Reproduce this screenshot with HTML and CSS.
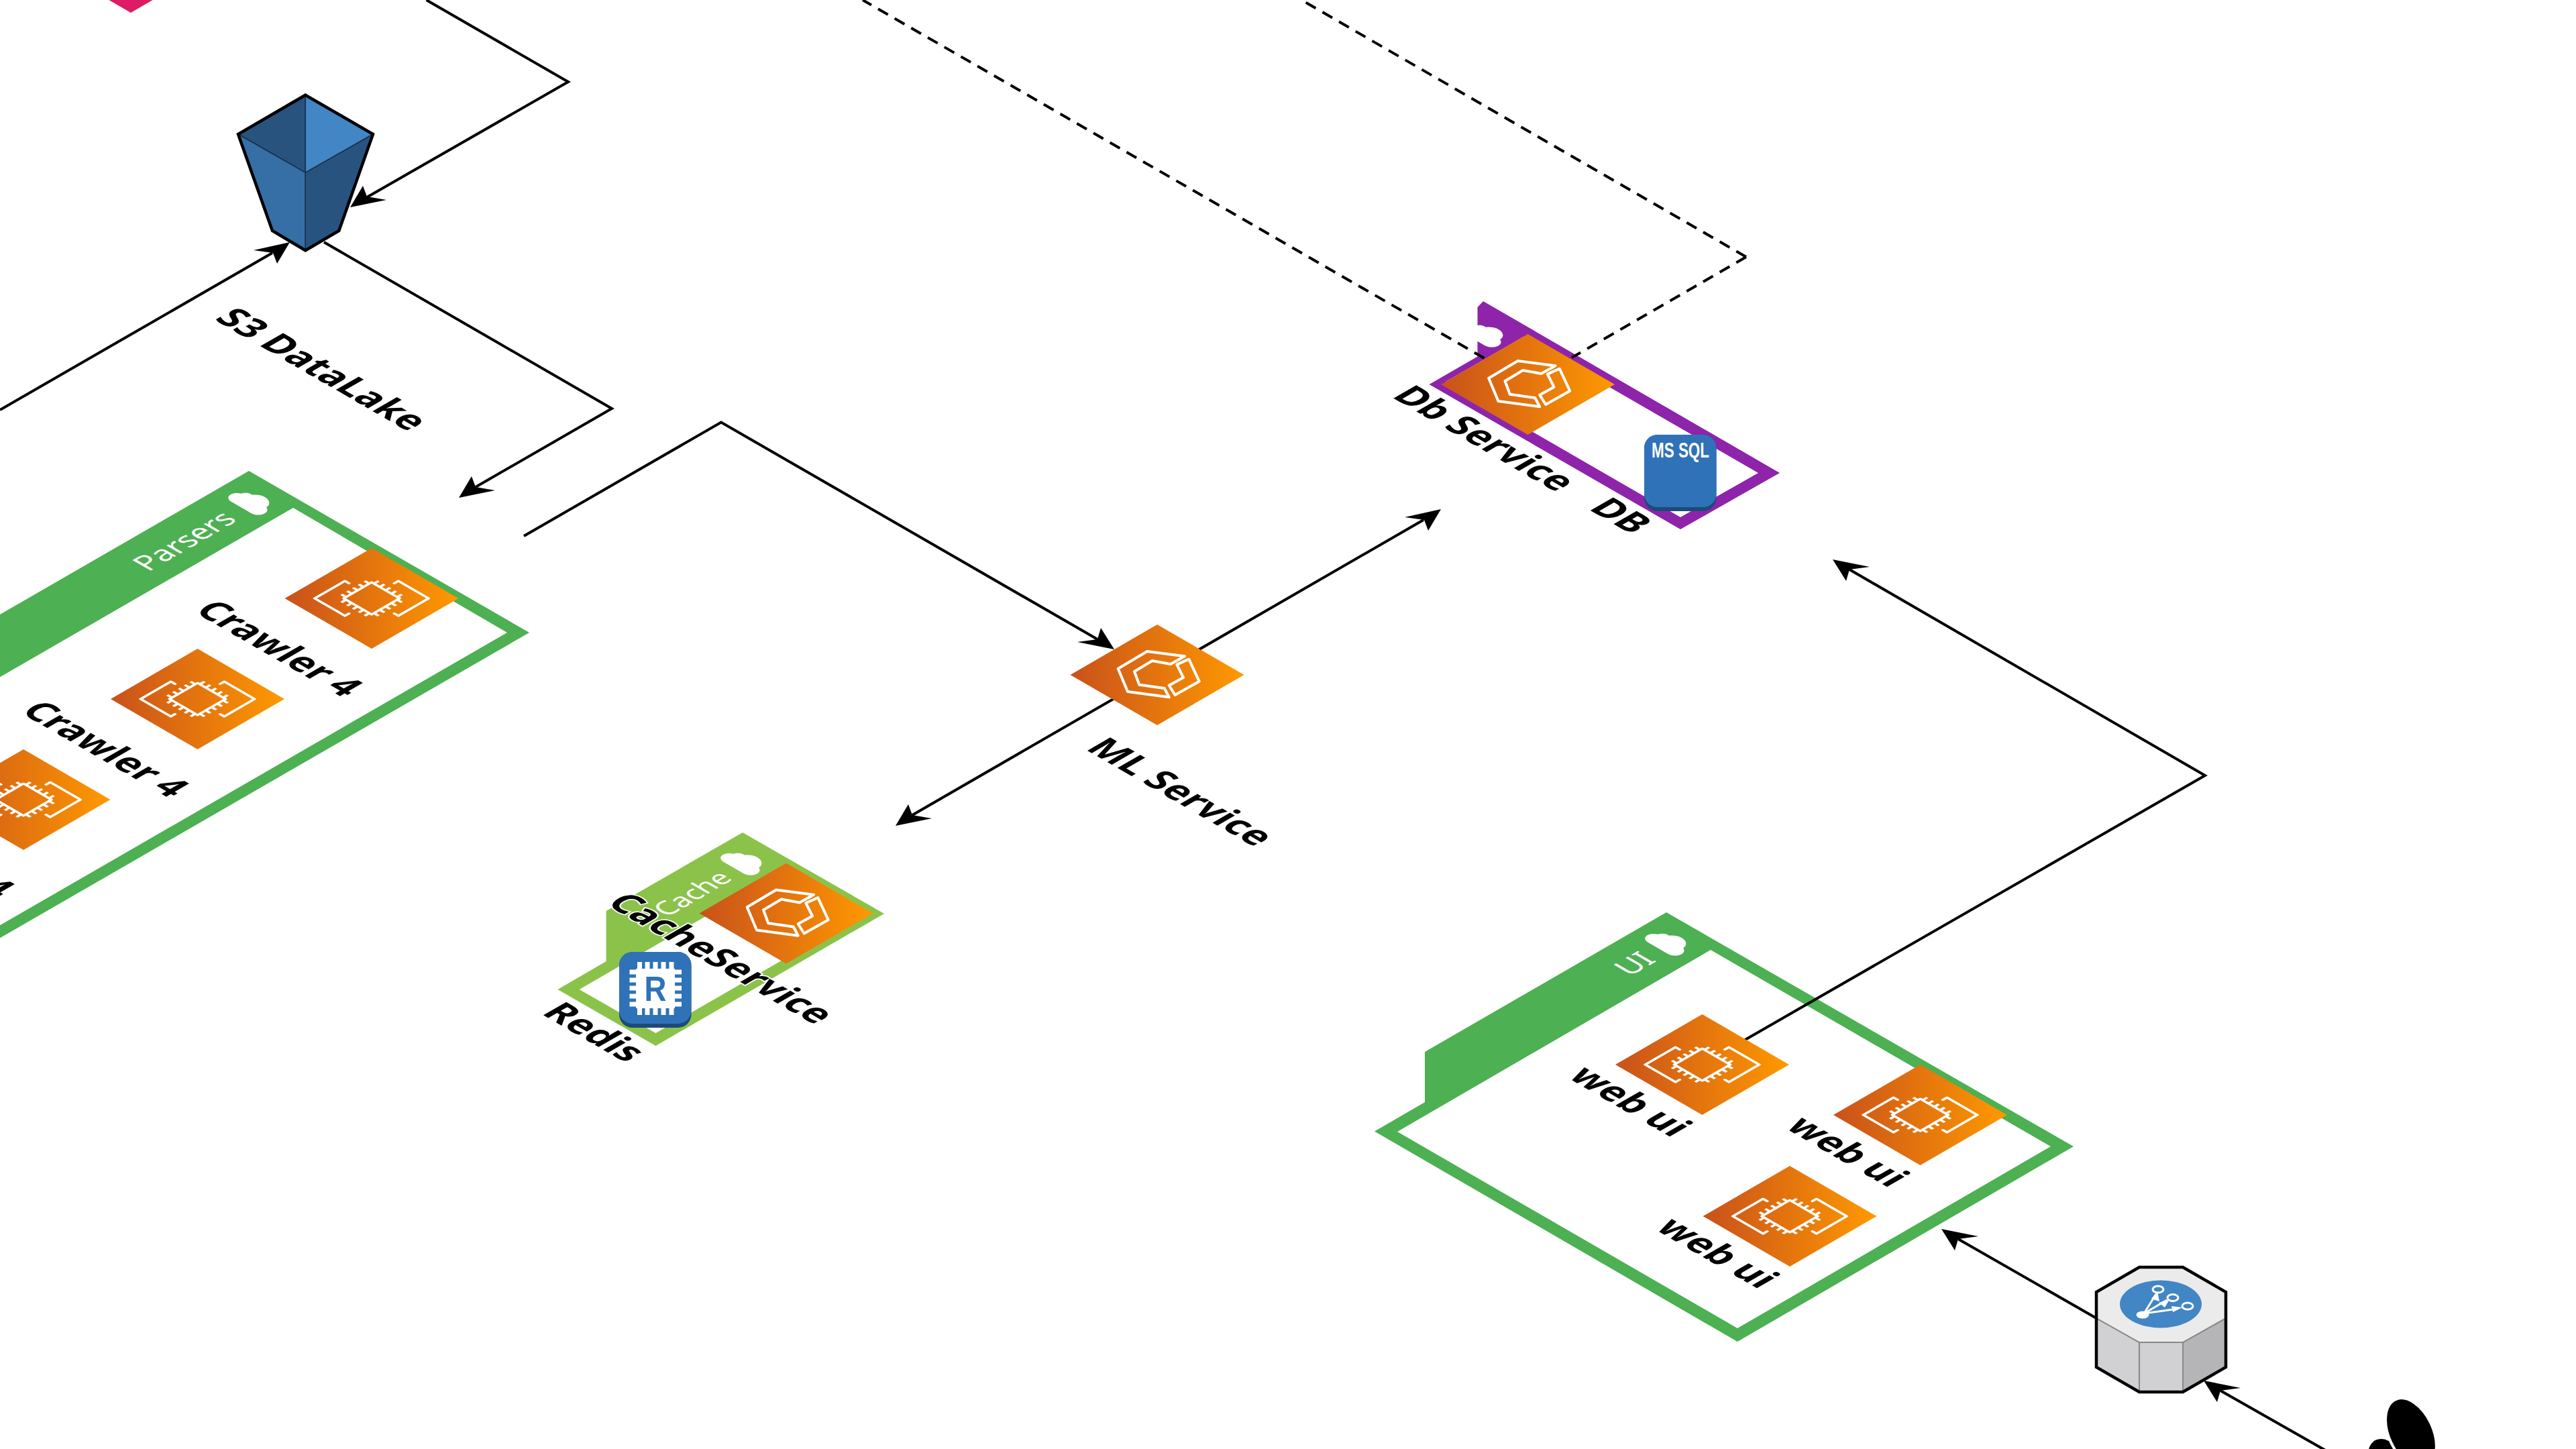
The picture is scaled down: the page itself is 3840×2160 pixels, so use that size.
FILE: index.html
```html
<!DOCTYPE html>
<html lang="en">
<head>
<meta charset="utf-8">
<title>Isometric architecture diagram</title>
<link rel="stylesheet" href="styles.css">
</head>
<body>
<svg class="canvas" xmlns="http://www.w3.org/2000/svg" width="3840" height="2160" viewBox="0 0 3840 2160">
  <defs>
    <linearGradient id="orange" x1="0" y1="0" x2="1" y2="0">
      <stop offset="0" stop-color="#C8511B"/>
      <stop offset="1" stop-color="#FF9900"/>
    </linearGradient>
    <path id="arrow-dl" d="M0 0L19 -32L25 -16L54 -11Z"/>
    <path id="arrow-ur" d="M0 0L-54 12L-25 16L-19 32Z"/>
    <path id="arrow-dr" d="M0 0L-55 -11L-25 -15L-20 -32Z"/>
    <path id="arrow-ul" d="M0 0L55 11L25 15L20 32Z"/>
    <path id="cloud" class="cloud" transform="matrix(1.108 .64 -1.108 .64 0 0)" d="M-14 14H12C18 14 22 10 22 5C22 1 19 -2 16 -3C16 -9 10 -14 3 -14C-2 -14 -6 -11 -8 -8C-11 -9 -16 -7 -17 -2C-20 -1 -23 2 -23 6C-23 11 -19 14 -14 14Z"/>
    <g id="ec2">
      <polygon class="tile" points="-129.5,0 0,-75 129.5,0 0,75"/>
      <g class="glyph" transform="matrix(.866 .5 -.866 .5 0 0)">
        <rect x="-24" y="-24" width="48" height="48"/>
        <path d="M-42 -3H-49V49H3V42M-3 -42V-49H49V3H42"/>
        <path class="pins" d="M-20 -24V-32M-10 -24V-32M0 -24V-32M10 -24V-32M20 -24V-32M-20 24V32M-10 24V32M0 24V32M10 24V32M20 24V32M-24 -20H-32M-24 -10H-32M-24 0H-32M-24 10H-32M-24 20H-32M24 -20H32M24 -10H32M24 0H32M24 10H32M24 20H32"/>
      </g>
    </g>
    <g id="hexbox">
      <polygon class="tile" points="-129.5,0 0,-75 129.5,0 0,75"/>
      <g class="glyph">
        <polygon points="41,-27.7 -15,-35 -58.3,-9.3 -44,25 17.7,33.3 10.7,20 -26.7,14.7 -34,-5 -7.3,-21 20,-16"/>
        <polygon points="47.3,-23.3 62.7,9.7 26.7,30 17.7,15.7 39,4 29.3,-15.3"/>
      </g>
    </g>
  </defs>

  <polygon class="pink" points="195,19 128,-20 195,-60 262,-20"/>

  <!-- groups -->
  <path class="group group-green" fill-rule="evenodd" d="M371 702L789 943L-100 1456L-100 916L0 916ZM437 757L756 943L-100 1437L-100 1067Z"/>
  <path class="group group-lime" fill-rule="evenodd" d="M1107 1241L1318 1362L977.5 1559L831.4 1475L903.6 1433V1358ZM1176 1294L1290 1360L977.5 1540L863.6 1475Z"/>
  <path class="group group-purple" fill-rule="evenodd" d="M2211 449L2653 705L2505 789L2130.5 573L2202.5 531.5V458ZM2270 502.6L2621 705L2505 771L2155 569Z"/>
  <path class="group group-green" fill-rule="evenodd" d="M2484 1360L3091 1709L2590 2000L2049 1686.5L2124 1643V1568ZM2550 1416L3057 1709L2590 1980L2083 1687Z"/>

  <use href="#cloud" x="376" y="748"/>
  <use href="#cloud" x="1110" y="1285"/>
  <use href="#cloud" x="2215" y="498"/>
  <use href="#cloud" x="2488" y="1405"/>

  <!-- connectors -->
  <polyline class="wire" points="635.6,0 847,122 547,294"/>
  <polyline class="wire" points="0,611 406,377"/>
  <polyline class="wire" points="483,361 912,609 709,726"/>
  <polyline class="wire" points="781,799 1075,629.5 1636,953"/>
  <polyline class="wire" points="1360,1215 2122,775"/>
  <polyline class="wire" points="2537,1587 3287,1156 2757,849"/>
  <polyline class="wire" points="3125,1965 2919,1847"/>
  <polyline class="wire" points="3500,2181 3310,2073"/>
  <line class="wire dash" x1="2212.6" y1="534" x2="1286" y2="0"/>
  <line class="wire dash" x1="2603" y1="383" x2="1940" y2="0"/>
  <line class="wire dash" x1="2603" y1="383" x2="2343" y2="533"/>

  <use class="head" href="#arrow-dl" x="522" y="309"/>
  <use class="head" href="#arrow-ur" x="432" y="361"/>
  <use class="head" href="#arrow-dl" x="684" y="742"/>
  <use class="head" href="#arrow-dr" x="1661" y="968"/>
  <use class="head" href="#arrow-ur" x="2148" y="759"/>
  <use class="head" href="#arrow-dl" x="1335" y="1231"/>
  <use class="head" href="#arrow-ul" x="2732" y="834"/>
  <use class="head" href="#arrow-ul" x="2894" y="1832"/>
  <use class="head" href="#arrow-ul" x="3285" y="2058"/>

  <!-- S3 bucket -->
  <g class="bucket">
    <polygon class="b-back-l" points="455.3,141.7 355,200 455.3,257.3"/>
    <polygon class="b-back-r" points="455.3,141.7 556,200 455.3,257.3"/>
    <polygon class="b-front-l" points="355,200 455.3,257.3 455.3,373.3 406,344"/>
    <polygon class="b-front-r" points="556,200 455.3,257.3 455.3,373.3 505.3,344"/>
    <polygon class="b-outline" points="455.3,141.7 556,200 505.3,344 455.3,373.3 406,344 355,200"/>
  </g>

  <!-- compute tiles -->
  <use href="#ec2" x="554" y="892"/>
  <use href="#ec2" x="294.5" y="1042"/>
  <use href="#ec2" x="35" y="1192"/>
  <use href="#ec2" x="2537.5" y="1587"/>
  <use href="#ec2" x="2862.5" y="1662"/>
  <use href="#ec2" x="2668" y="1813"/>
  <use href="#hexbox" x="1725" y="1006"/>
  <use href="#hexbox" x="2277.5" y="573"/>
  <use href="#hexbox" x="1172" y="1361.5"/>

  <!-- MS SQL tile -->
  <rect class="tile-shadow" x="2451" y="648" width="107.5" height="114" rx="20"/>
  <rect class="tile-face" x="2451" y="648" width="107.5" height="108" rx="20"/>
  <text class="icon-text" x="2505" y="682" text-anchor="middle" textLength="86" lengthAdjust="spacingAndGlyphs">MS SQL</text>

  <!-- Redis tile -->
  <rect class="tile-shadow" x="923" y="1419" width="107.5" height="113" rx="20"/>
  <rect class="tile-face" x="923" y="1419" width="107.5" height="107" rx="20"/>
  <rect class="chip" x="948" y="1444" width="58" height="59"/>
  <path class="chip-pins" d="M953.5 1434V1445M965 1434V1445M977 1434V1445M989 1434V1445M1001 1434V1445M953.5 1502V1513M965 1502V1513M977 1502V1513M989 1502V1513M1001 1502V1513M938.5 1449H949M938.5 1461H949M938.5 1473H949M938.5 1485H949M938.5 1497H949M1005 1449H1016M1005 1461H1016M1005 1473H1016M1005 1485H1016M1005 1497H1016"/>
  <text class="chip-r" x="977" y="1492" text-anchor="middle" textLength="33" lengthAdjust="spacingAndGlyphs">R</text>

  <!-- load balancer -->
  <polygon class="hex-left" points="3125,1965 3189,2001 3189,2075 3125,2038"/>
  <polygon class="hex-left" points="3189,2001 3254,2001 3254,2075 3189,2075"/>
  <polygon class="hex-right" points="3254,2001 3318,1965 3318,2038 3254,2075"/>
  <polygon class="hex-top" points="3189,1889 3254,1889 3318,1926 3318,1965 3254,2001 3189,2001 3125,1965 3125,1926"/>
  <polygon class="hex-outline" points="3189,1889 3254,1889 3318,1926 3318,2038 3254,2075 3189,2075 3125,2038 3125,1926"/>
  <ellipse class="lb-disc" cx="3221" cy="1944" rx="61" ry="35.5"/>
  <ellipse class="lb-dot" cx="3194" cy="1960" rx="9.5" ry="5.5"/>
  <ellipse class="lb-ring" cx="3217" cy="1922" rx="8" ry="5"/>
  <ellipse class="lb-ring" cx="3239" cy="1934.5" rx="8" ry="5"/>
  <ellipse class="lb-ring" cx="3261" cy="1947" rx="8" ry="5"/>
  <path class="lb-ray" d="M3196 1958L3214 1929M3196 1958L3230 1938M3196 1958L3246 1951"/>
  <path class="lb-tip" d="M3216 1925L3219 1940L3207 1936ZM3234 1937L3227 1949L3218 1942ZM3253 1949L3239 1956L3237 1947Z"/>

  <!-- client -->
  <ellipse class="client" cx="3562" cy="2190" rx="28" ry="48" transform="rotate(-25 3562 2190)"/>
  <ellipse class="client client-front" cx="3594" cy="2136" rx="33" ry="55" transform="rotate(-25 3594 2136)"/>

  <!-- labels -->
  <g class="titles">
    <text transform="matrix(.866 -.5 .866 .5 288 814)">Parsers</text>
    <text class="title-small" transform="matrix(.866 -.5 .866 .5 1044 1339)">Cache</text>
    <text transform="matrix(.866 -.5 .866 .5 2450 1444)">UI</text>
  </g>
  <g class="labels">
    <text transform="matrix(.866 .5 -.866 .5 464 560)">S3 DataLake</text>
    <text transform="matrix(.866 .5 -.866 .5 400 976)">Crawler 4</text>
    <text transform="matrix(.866 .5 -.866 .5 141 1126)">Crawler 4</text>
    <text transform="matrix(.866 .5 -.866 .5 -119 1276)">Crawler 4</text>
    <text transform="matrix(.866 .5 -.866 .5 1744 1190)">ML Service</text>
    <text transform="matrix(.866 .5 -.866 .5 2197 663)">Db Service</text>
    <text transform="matrix(.866 .5 -.866 .5 2400 778)">DB</text>
    <text class="halo" transform="matrix(.866 .5 -.866 .5 1059 1438)">CacheService</text>
    <text transform="matrix(.866 .5 -.866 .5 870 1548)">Redis</text>
    <text transform="matrix(.866 .5 -.866 .5 2414 1651)">web ui</text>
    <text transform="matrix(.866 .5 -.866 .5 2738 1726)">web ui</text>
    <text transform="matrix(.866 .5 -.866 .5 2544 1877)">web ui</text>
  </g>
</svg>
</body>
</html>
```

FILE: styles.css
```css
html, body {
  margin: 0;
  padding: 0;
  background: #fff;
}
.canvas {
  display: block;
  overflow: hidden;
  background: #fff;
}
.pink { fill: #DD1C65; }
.group-green { fill: #4DB052; }
.group-lime { fill: #8BC34A; }
.group-purple { fill: #8E24AA; }
.cloud { fill: #fff; }
.wire {
  fill: none;
  stroke: #000;
  stroke-width: 4;
  stroke-linejoin: miter;
}
.dash { stroke-dasharray: 17 11.5; }
.head { fill: #000; }
.tile { fill: url(#orange); }
.glyph {
  fill: none;
  stroke: #fff;
  stroke-width: 4;
  stroke-linejoin: round;
  stroke-linecap: round;
}
.glyph .pins { stroke-linecap: butt; }
.b-back-l { fill: #29537F; }
.b-back-r { fill: #4286C5; }
.b-front-l { fill: #356FA5; }
.b-front-r { fill: #29537F; }
.bucket polygon {
  stroke: #16314E;
  stroke-width: 1.5;
}
.bucket .b-outline {
  fill: none;
  stroke: #000;
  stroke-width: 4.5;
  stroke-linejoin: miter;
}
.tile-shadow { fill: #1D4A78; }
.tile-face { fill: #2F72B8; }
.icon-text {
  fill: #fff;
  font: 700 31px "Liberation Sans", Arial, sans-serif;
}
.chip { fill: #fff; }
.chip-pins {
  fill: none;
  stroke: #fff;
  stroke-width: 7;
}
.chip-r {
  fill: #2F72B8;
  font: 700 51px "Liberation Sans", Arial, sans-serif;
}
.hex-left { fill: #D1D1D3; stroke: #888; stroke-width: 2; }
.hex-right { fill: #B5B5B7; stroke: #888; stroke-width: 2; }
.hex-top { fill: #EBEBEB; stroke: #888; stroke-width: 2; }
.hex-outline {
  fill: none;
  stroke: #000;
  stroke-width: 4.5;
}
.lb-disc { fill: #4286C5; }
.lb-dot { fill: #fff; }
.lb-ring { fill: #4286C5; stroke: #fff; stroke-width: 3; }
.lb-ray { fill: none; stroke: #fff; stroke-width: 3; }
.lb-tip { fill: #fff; }
.client { fill: #000; }
.client-front { stroke: #fff; stroke-width: 4; }
.labels text {
  fill: #000;
  font: 700 55px "Noto Sans", "Open Sans", sans-serif;
  text-anchor: middle;
}
.labels .halo {
  stroke: #fff;
  stroke-width: 4;
  paint-order: stroke;
}
.titles text {
  fill: #fff;
  font: 400 44px "Noto Sans", "Open Sans", sans-serif;
  text-anchor: middle;
}
.titles .title-small { font-size: 40px; }
```
